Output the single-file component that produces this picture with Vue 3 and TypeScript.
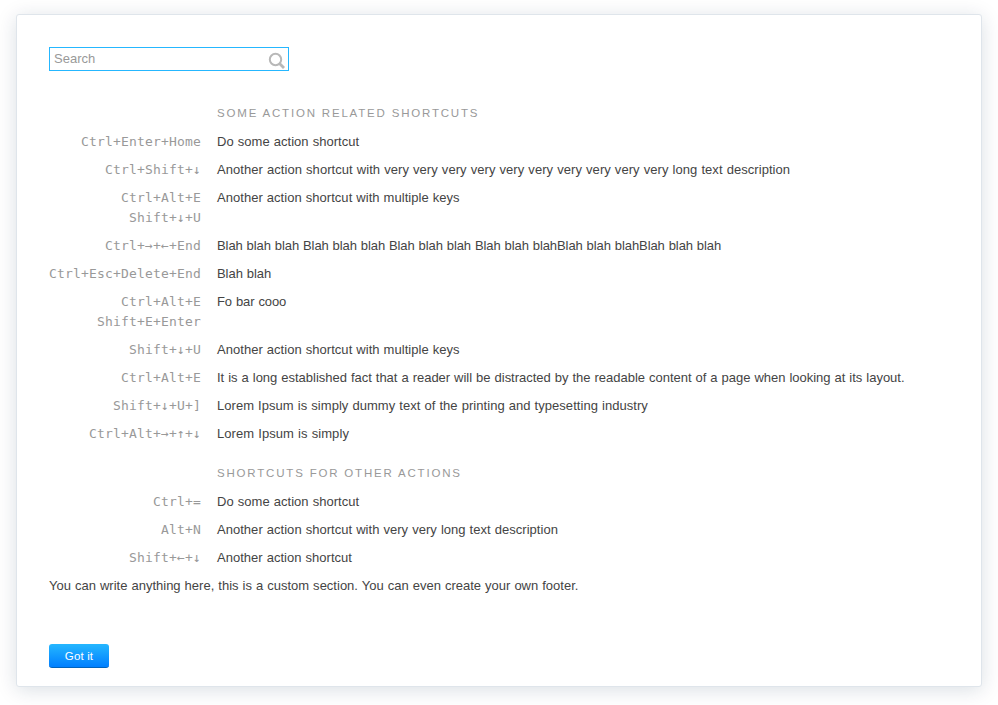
<script setup lang="ts">
interface Shortcut { keys: string[]; text: string; tracking: number }
interface Section { title: string; items: Shortcut[] }

const sections: Section[] = [
  {
    title: 'Some action related shortcuts',
    items: [
      { keys: ['Ctrl+Enter+Home'], text: 'Do some action shortcut', tracking: 0.036 },
      { keys: ['Ctrl+Shift+↓'], text: 'Another action shortcut with very very very very very very very very very very long text description', tracking: 0.055 },
      { keys: ['Ctrl+Alt+E', 'Shift+↓+U'], text: 'Another action shortcut with multiple keys', tracking: 0.035 },
      { keys: ['Ctrl+→+←+End'], text: 'Blah blah blah Blah blah blah Blah blah blah Blah blah blahBlah blah blahBlah blah blah', tracking: -0.08 },
      { keys: ['Ctrl+Esc+Delete+End'], text: 'Blah blah', tracking: -0.05 },
      { keys: ['Ctrl+Alt+E', 'Shift+E+Enter'], text: 'Fo bar cooo', tracking: -0.08 },
      { keys: ['Shift+↓+U'], text: 'Another action shortcut with multiple keys', tracking: 0.035 },
      { keys: ['Ctrl+Alt+E'], text: 'It is a long established fact that a reader will be distracted by the readable content of a page when looking at its layout.', tracking: -0.012 },
      { keys: ['Shift+↓+U+]'], text: 'Lorem Ipsum is simply dummy text of the printing and typesetting industry', tracking: 0.043 },
      { keys: ['Ctrl+Alt+→+↑+↓'], text: 'Lorem Ipsum is simply', tracking: 0.07 },
    ],
  },
  {
    title: 'Shortcuts for other actions',
    items: [
      { keys: ['Ctrl+='], text: 'Do some action shortcut', tracking: 0.036 },
      { keys: ['Alt+N'], text: 'Another action shortcut with very very long text description', tracking: 0.03 },
      { keys: ['Shift+←+↓'], text: 'Another action shortcut', tracking: 0.02 },
    ],
  },
]
</script>

<template>
  <div class="page">
    <main class="dialog">
      <div class="search">
        <input class="field" type="text" placeholder="Search" aria-label="Search" />
        <svg class="icon" width="18" height="18" viewBox="0 0 18 18" aria-hidden="true">
          <circle cx="7.5" cy="7.5" r="5.7" />
          <path d="M11.5 11.5 L16 16" />
        </svg>
      </div>
      <section v-for="section in sections" :key="section.title" class="section">
        <h2 class="title">{{ section.title }}</h2>
        <div v-for="(item, i) in section.items" :key="i" class="row">
          <div class="keys"><div v-for="key in item.keys" :key="key">{{ key }}</div></div>
          <div class="text" :style="{ letterSpacing: item.tracking + 'px' }">{{ item.text }}</div>
        </div>
      </section>
      <p class="note">You can write anything here, this is a custom section. You can even create your own footer.</p>
      <button class="button" type="button">Got it</button>
    </main>
  </div>
</template>

<style>
body { background: #fff; }
</style>

<style scoped>
.page {
  box-sizing: border-box;
  height: 705px;
  padding: 14px 16px 0;
  overflow: hidden;
}
.dialog {
  box-sizing: border-box;
  width: 966px;
  height: 673px;
  padding: 32px;
  border: 1px solid #dfe5eb;
  border-radius: 3px;
  background: #fff;
  box-shadow: 0 3px 20px rgba(0, 42, 76, 0.15);
  color: #444;
  font: 13px/20px "Liberation Sans", Arial, sans-serif;
  word-spacing: 0.39px;
}
.search {
  box-sizing: border-box;
  display: flex;
  align-items: center;
  width: 240px;
  height: 24px;
  padding: 0 2px 0 4px;
  border: 1px solid #25b7ff;
}
.field {
  flex: 1;
  min-width: 0;
  height: 20px;
  padding: 0;
  border: 0;
  outline: 0;
  background: none;
  font: inherit;
}
.field::placeholder { color: #999; opacity: 1; }
.icon { margin-top: 3px; fill: none; stroke: #b8b8b8; stroke-width: 2; }
.icon path { stroke-width: 2.8; }
.section { padding-top: 20px; }
.search + .section { padding-top: 33px; }
.title {
  margin: 0 0 0 168px;
  padding-bottom: 2px;
  font-size: 11.5px;
  line-height: 18px;
  font-weight: 400;
  letter-spacing: 1.81px;
  word-spacing: 0;
  text-transform: uppercase;
  color: #999;
}
.row { display: flex; gap: 16px; margin-top: 8px; }
.keys {
  width: 152px;
  text-align: right;
  white-space: nowrap;
  font-family: "DejaVu Sans Mono", monospace;
  letter-spacing: 0.174px;
  word-spacing: 0;
  color: #999;
}
.note { margin: 8px 0 0; letter-spacing: 0.005px; }
.button {
  display: block;
  width: 60px;
  height: 24px;
  margin-top: 48px;
  padding: 0;
  border: 0;
  border-bottom: 1px solid #0063bd;
  border-radius: 3px;
  background: linear-gradient(#25b7ff, #007fff);
  color: #fff;
  font: 11.5px/20px "Liberation Sans", Arial, sans-serif;
  letter-spacing: 0.15px;
}
</style>
